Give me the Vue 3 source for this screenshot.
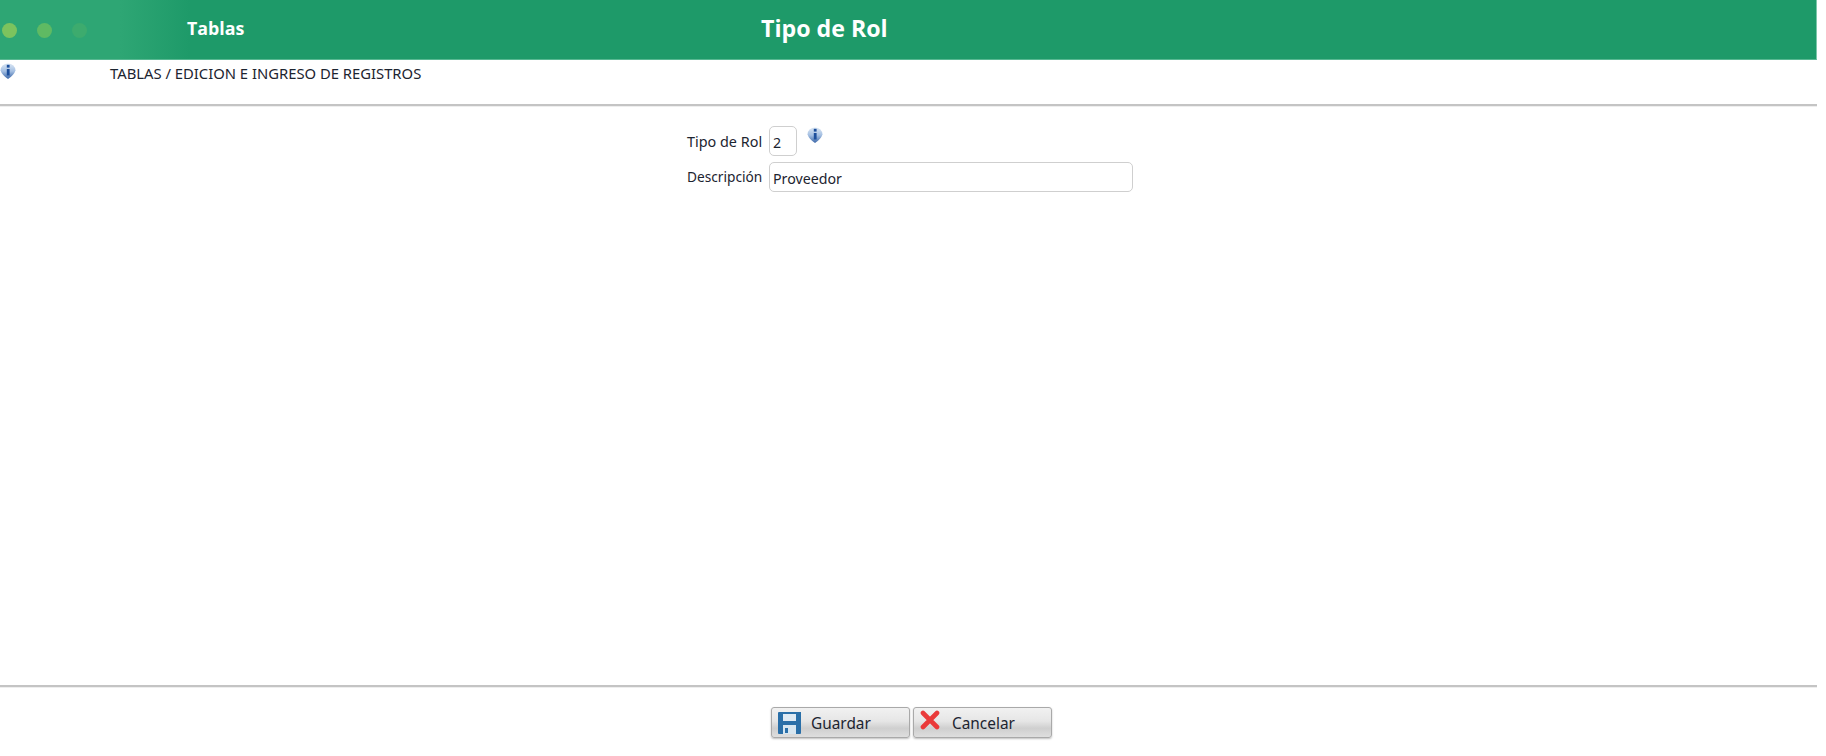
<script setup>
const infoStops = [
  { o: '0', c: '#dbe7f4' },
  { o: '0.5', c: '#a4bfe2' },
  { o: '1', c: '#3a66a8' }
]
</script>

<template>
  <div class="page">
    <header class="top">
      <div class="dots">
        <span class="dot d1"></span>
        <span class="dot d2"></span>
        <span class="dot d3"></span>
      </div>
      <div class="section">Tablas</div>
      <h1 class="title">Tipo de Rol</h1>
    </header>

    <div class="crumb">
      <svg class="info small" viewBox="0 0 16 16">
        <defs>
          <linearGradient id="ig1" x1="0" y1="0" x2="0" y2="1">
            <stop v-for="s in infoStops" :key="s.o" :offset="s.o" :stop-color="s.c" />
          </linearGradient>
        </defs>
        <path d="M0.5 7.5 A7.5 7 0 0 1 15.5 7.5 Q14 12 8 16 Q2 12 0.5 7.5Z" fill="url(#ig1)" />
        <rect x="6.8" y="6" width="2.8" height="6.5" fill="#1d4f9c" />
        <rect x="6.8" y="1.8" width="2.8" height="2.8" fill="#1d4f9c" />
      </svg>
      <span class="crumb-text">TABLAS / EDICION E INGRESO DE REGISTROS</span>
    </div>

    <main class="main">
      <div class="row first">
        <label class="label">Tipo de Rol</label>
        <input class="field code" value="2" />
        <svg class="info" viewBox="0 0 16 16">
          <path d="M0.5 7.5 A7.5 7 0 0 1 15.5 7.5 Q14 12 8 16 Q2 12 0.5 7.5Z" fill="url(#ig1)" />
          <rect x="6.8" y="6" width="2.8" height="6.5" fill="#1d4f9c" />
          <rect x="6.8" y="1.8" width="2.8" height="2.8" fill="#1d4f9c" />
        </svg>
      </div>
      <div class="row">
        <label class="label up">Descripción</label>
        <input class="field desc" value="Proveedor" />
      </div>
    </main>

    <footer class="bottom">
      <button class="btn save">
        <svg class="ic" viewBox="0 0 23 22">
          <path d="M0 1Q0 0 1 0H23V21Q23 22 22 22H1Q0 22 0 21Z" fill="#2a6fa8" />
          <rect x="5" y="2" width="13" height="7" fill="#dfeaf3" />
          <rect x="5" y="13" width="13" height="9" fill="#d7e6f0" />
          <rect x="7" y="16" width="3" height="5" fill="#2a6fa8" />
        </svg>
        <span class="btn-text">Guardar</span>
      </button>
      <button class="btn cancel">
        <svg class="ic x" viewBox="0 0 20 20">
          <path d="M3 3 L17 17 M17 3 L3 17" stroke="#ea3a3a" stroke-width="4.6" stroke-linecap="round" fill="none" />
        </svg>
        <span class="btn-text">Cancelar</span>
      </button>
    </footer>
  </div>
</template>

<style>
html, body { background: #fff; }
</style>

<style scoped>
.page {
  width: 1817px;
  height: 756px;
  display: flex;
  flex-direction: column;
  font-family: "Noto Sans", sans-serif;
  font-size: 14px;
  color: #1c2430;
  overflow: hidden;
}
.top {
  height: 60px;
  flex: none;
  display: flex;
  align-items: center;
  background: linear-gradient(90deg, #2ea674 0, #2ea674 120px, #1e9a69 190px);
  color: #fff;
  box-sizing: border-box;
  border-bottom: 1px solid #58b892;
  border-right: 1px solid #7cc7aa;
  padding-bottom: 3px;
}
.dots {
  width: 187px;
  flex: none;
  display: flex;
  gap: 20px;
  padding: 4px 0 0 2px;
  box-sizing: border-box;
}
.dot {
  width: 15px;
  height: 15px;
  border-radius: 50%;
}
.d1 { background: #7cc35e; }
.d2 { background: #5fba63; }
.d3 { background: #3dab6e; }
.section {
  width: 579px;
  flex: none;
  font-family: "Open Sans", sans-serif;
  font-size: 17.8px;
  font-weight: 700;
}
.title {
  margin: 0 0 0 -5px;
  font-family: "Open Sans", sans-serif;
  font-size: 23.2px;
  font-weight: 700;
}
.crumb {
  height: 46px;
  flex: none;
  display: flex;
  align-items: flex-start;
  box-sizing: border-box;
  border-bottom: 2px solid #c4c4c4;
  box-shadow: 0 1px 0 #eeeeee;
}
.info {
  width: 16px;
  height: 16px;
  flex: none;
}
.info.small {
  margin: 3px 0 0 0;
}
.crumb-text {
  margin: 5px 0 0 94px;
  font-size: 14.8px;
  line-height: 16px;
  white-space: nowrap;
}
.main {
  height: 581px;
  flex: none;
  border-bottom: 2px solid #c4c4c4;
  box-shadow: 0 1px 0 #eeeeee;
  padding: 20px 0 0 687px;
  box-sizing: border-box;
}
.row {
  display: flex;
  align-items: center;
  margin-bottom: 6px;
}
.row.first .info {
  margin: -13px 0 0 10px;
}
.label {
  width: 82px;
  flex: none;
  font-size: 14.4px;
  white-space: nowrap;
}
.label.up {
  position: relative;
  top: -1px;
  font-size: 13.7px;
}
.field {
  height: 30px;
  box-sizing: border-box;
  border: 1px solid #cfcfcf;
  border-radius: 5px;
  padding: 3px 3px 0;
  font: 14.2px "Noto Sans", sans-serif;
  color: #1c2430;
  background: #fff;
  outline: none;
}
.code { width: 28px; }
.desc { width: 364px; }
.bottom {
  flex: none;
  display: flex;
  gap: 3px;
  padding: 20px 0 0 771px;
  box-sizing: border-box;
}
.btn {
  width: 139px;
  height: 31px;
  display: flex;
  align-items: center;
  padding: 1px 0 0 6px;
  border: 1px solid #a9a9a9;
  border-radius: 3px;
  background: linear-gradient(180deg, #f1f1f1 0, #e6e6e6 45%, #cfcfcf 70%, #dedede 100%);
  box-shadow: 0 1px 2px rgba(0, 0, 0, 0.25);
  font: 15.4px "Noto Sans", sans-serif;
  color: #1c2430;
  box-sizing: border-box;
}
.ic {
  width: 23px;
  height: 22px;
  flex: none;
  margin-top: -1px;
}
.ic.x {
  width: 20px;
  height: 20px;
  margin: -6px 0 0 0;
}
.btn-text {
  margin-left: 10px;
}
.cancel .btn-text {
  margin-left: 12px;
}
</style>
